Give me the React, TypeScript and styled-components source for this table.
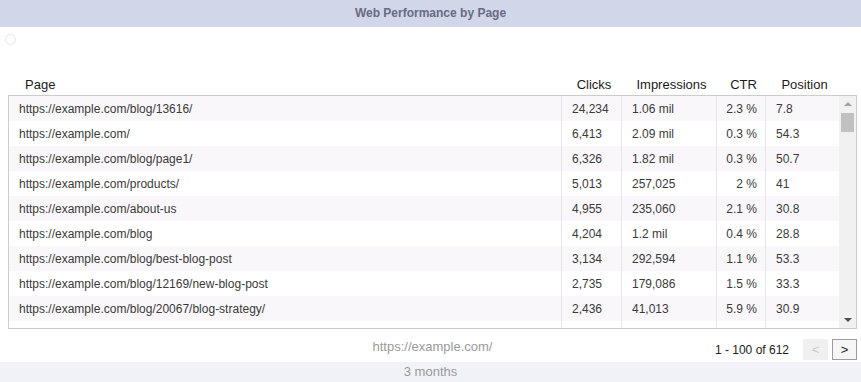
import React from "react";
import styled, { createGlobalStyle } from "styled-components";

const Global = createGlobalStyle`
  html, body { margin: 0; padding: 0; background: #fff; }
  body { font-family: "Liberation Sans", Arial, sans-serif; }
`;

const COLS = "553px 60px 95px 49px 73px";

const Page = styled.div`
  width: 861px;
  height: 382px;
  display: flex;
  flex-direction: column;
  overflow: hidden;
`;

const TitleBar = styled.div`
  height: 27px;
  line-height: 27px;
  background: #d1d6e8;
  color: #686b83;
  font-weight: bold;
  font-size: 12px;
  text-align: center;
`;

const Content = styled.div`
  flex: 1;
  display: flex;
  flex-direction: column;
  padding: 0 4px 0 8px;
`;

const Radio = styled.div`
  width: 9px;
  height: 9px;
  border: 1px solid #e6e6e6;
  border-radius: 50%;
  margin: 7px 0 0 -3px;
`;

const HeaderRow = styled.div`
  display: grid;
  grid-template-columns: ${COLS};
  height: 22px;
  margin-top: 28px;
  padding-left: 1px;
  align-items: center;
  font-size: 13px;
  color: #1a1a1a;
`;

const HeadCell = styled.div<{ $left?: boolean }>`
  text-align: ${(p) => (p.$left ? "left" : "center")};
  padding-left: ${(p) => (p.$left ? "16px" : "4px")};
`;

const TableBox = styled.div`
  display: flex;
  height: 232px;
  border: 1px solid #cccccc;
  overflow: hidden;
`;

const Body = styled.div`
  flex: 1;
  overflow: hidden;
`;

const Row = styled.div<{ $alt: boolean }>`
  display: grid;
  grid-template-columns: ${COLS};
  height: 25px;
  background: ${(p) => (p.$alt ? "#f9f7f9" : "#ffffff")};
  font-size: 12px;
  color: #3a3a3a;
`;

const Cell = styled.div<{ $right?: boolean; $last?: boolean }>`
  display: flex;
  align-items: center;
  justify-content: ${(p) => (p.$right ? "flex-end" : "flex-start")};
  padding: ${(p) => (p.$right ? "0 8px 0 0" : "0 0 0 10px")};
  border-right: ${(p) => (p.$last ? "none" : "1px solid #e6e6e6")};
  white-space: nowrap;
  overflow: hidden;
`;

const Scrollbar = styled.div`
  width: 17px;
  background: #f1f1f1;
  display: flex;
  flex-direction: column;
  align-items: center;
`;

const Arrow = styled.div<{ $down?: boolean }>`
  width: 0;
  height: 0;
  border-left: 4px solid transparent;
  border-right: 4px solid transparent;
  ${(p) =>
    p.$down
      ? "border-top: 4px solid #505050; margin-top: auto; margin-bottom: 6px;"
      : "border-bottom: 4px solid #a3a3a3; margin-top: 6px;"}
`;

const Thumb = styled.div`
  width: 13px;
  height: 19px;
  background: #c1c1c1;
  margin-top: 7px;
`;

const Footer = styled.div`
  display: grid;
  grid-template-columns: 1fr auto 1fr;
  height: 32px;
  padding-top: 10px;
  box-sizing: border-box;
`;

const FooterUrl = styled.div`
  grid-column: 2;
  font-size: 13px;
  line-height: 16px;
  color: #9a9a9a;
`;

const Pager = styled.div`
  grid-column: 3;
  justify-self: end;
  display: flex;
  align-items: center;
  height: 21px;
  font-size: 12px;
  color: #222;
`;

const PageInfo = styled.span`
  margin-right: 10px;
`;

const PageBtn = styled.div<{ $disabled?: boolean }>`
  width: 23px;
  height: 19px;
  margin-left: 4px;
  display: flex;
  align-items: center;
  justify-content: center;
  font-size: 13px;
  box-sizing: content-box;
  border: 1px solid ${(p) => (p.$disabled ? "#f0f0f0" : "#9c9c9c")};
  background: ${(p) => (p.$disabled ? "#f0f0f0" : "#f6f6f6")};
  color: ${(p) => (p.$disabled ? "#c8c8c8" : "#222")};
`;

const BottomBar = styled.div`
  height: 20px;
  line-height: 20px;
  background: #f1f2f8;
  color: #9a9a9a;
  font-size: 13px;
  text-align: center;
`;

const rows = [
  ["https://example.com/blog/13616/", "24,234", "1.06 mil", "2.3 %", "7.8"],
  ["https://example.com/", "6,413", "2.09 mil", "0.3 %", "54.3"],
  ["https://example.com/blog/page1/", "6,326", "1.82 mil", "0.3 %", "50.7"],
  ["https://example.com/products/", "5,013", "257,025", "2 %", "41"],
  ["https://example.com/about-us", "4,955", "235,060", "2.1 %", "30.8"],
  ["https://example.com/blog", "4,204", "1.2 mil", "0.4 %", "28.8"],
  ["https://example.com/blog/best-blog-post", "3,134", "292,594", "1.1 %", "53.3"],
  ["https://example.com/blog/12169/new-blog-post", "2,735", "179,086", "1.5 %", "33.3"],
  ["https://example.com/blog/20067/blog-strategy/", "2,436", "41,013", "5.9 %", "30.9"],
  ["", "2,307", "1.73 mil", "0.1 %", "47.6"],
];

export default function App() {
  return (
    <Page>
      <Global />
      <TitleBar>Web Performance by Page</TitleBar>
      <Content>
        <Radio />
        <HeaderRow>
          <HeadCell $left>Page</HeadCell>
          <HeadCell>Clicks</HeadCell>
          <HeadCell>Impressions</HeadCell>
          <HeadCell>CTR</HeadCell>
          <HeadCell>Position</HeadCell>
        </HeaderRow>
        <TableBox>
          <Body>
            {rows.map((r, i) => (
              <Row key={i} $alt={i % 2 === 0}>
                <Cell>{r[0]}</Cell>
                <Cell>{r[1]}</Cell>
                <Cell>{r[2]}</Cell>
                <Cell $right>{r[3]}</Cell>
                <Cell $last>{r[4]}</Cell>
              </Row>
            ))}
          </Body>
          <Scrollbar>
            <Arrow />
            <Thumb />
            <Arrow $down />
          </Scrollbar>
        </TableBox>
        <Footer>
          <FooterUrl>https://example.com/</FooterUrl>
          <Pager>
            <PageInfo>1 - 100 of 612</PageInfo>
            <PageBtn $disabled>&lt;</PageBtn>
            <PageBtn>&gt;</PageBtn>
          </Pager>
        </Footer>
      </Content>
      <BottomBar>3 months</BottomBar>
    </Page>
  );
}
